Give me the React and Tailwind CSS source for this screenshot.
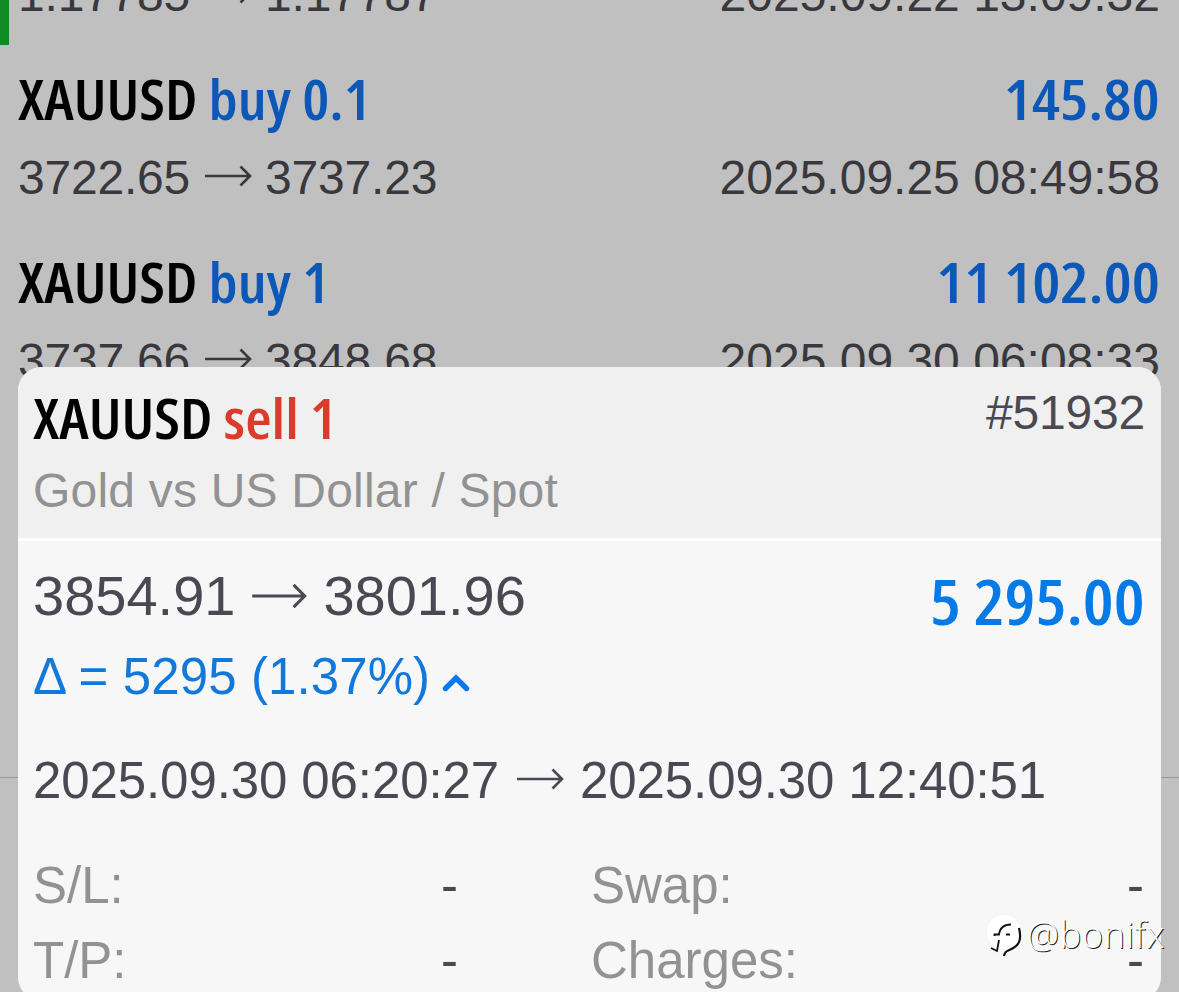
const deals = [
  { symbol: "EURUSD", action: "buy 1", profit: "2.00", open: "1.17785", close: "1.17787", time: "2025.09.22 13:09:32", marked: true },
  { symbol: "XAUUSD", action: "buy 0.1", profit: "145.80", open: "3722.65", close: "3737.23", time: "2025.09.25 08:49:58" },
  { symbol: "XAUUSD", action: "buy 1", profit: "11 102.00", open: "3737.66", close: "3848.68", time: "2025.09.30 06:08:33" },
];

const details = [
  { label: "S/L:", value: "-" },
  { label: "Swap:", value: "-" },
  { label: "T/P:", value: "-" },
  { label: "Charges:", value: "-" },
];

const Arrow = ({ className }) => (
  <svg viewBox="0 0 48 24" fill="none" stroke="currentColor" strokeWidth="2.6" className={className}>
    <path d="M1 12H46M36.500 2.500L46 12L36.500 21.500" />
  </svg>
);

const DealRow = ({ deal }) => (
  <div
    className={`h-[183px] shrink-0 pr-[19px] pt-[17px] ${deal.marked ? "border-l-[9px] border-[#128a24] pl-[9px]" : "pl-[18px]"}`}
  >
    <div className="flex h-[72px] justify-between whitespace-nowrap font-['Open_Sans'] text-[56px] font-semibold leading-[72px] font-stretch-75%">
      <div className="origin-left scale-x-[1.084]">
        <span className="text-black">{deal.symbol}</span>{" "}
        <span className="text-[#0b58b8]">{deal.action}</span>
      </div>
      <span className="origin-right scale-x-[1.125] text-[#0b58b8]">{deal.profit}</span>
    </div>
    <div className="mt-4 flex h-14 justify-between whitespace-nowrap text-5xl leading-14 text-[#39383d]">
      <div className="flex items-center tracking-[-0.2px]">
        <span>{deal.open}</span>
        <Arrow className="-mt-1 ml-[14px] mr-[13px] h-6 w-12" />
        <span>{deal.close}</span>
      </div>
      <span>{deal.time}</span>
    </div>
  </div>
);

const DealCard = () => (
  <div className="absolute left-[18px] top-[367px] h-[634px] w-[1143px] overflow-hidden rounded-3xl bg-[#f7f7f7] text-[#4a4953]">
    <div className="flex h-[174px] justify-between whitespace-nowrap border-b-[3px] border-[#fdfdfd] bg-[#f0f0f0] pl-[15px] pr-4">
      <div className="pt-[14px]">
        <div className="h-[72px] origin-left scale-x-[1.084] font-['Open_Sans'] text-[56px] font-semibold leading-[72px] font-stretch-75%">
          <span className="text-black">XAUUSD</span>{" "}
          <span className="text-[#da3b2b]">sell 1</span>
        </div>
        <div className="mt-[10px] text-5xl leading-14 tracking-[0.2px] text-[#929292]">Gold vs US Dollar / Spot</div>
      </div>
      <div className="pt-[18px] text-5xl leading-14 tracking-[-0.2px]">#51932</div>
    </div>

    <div className="whitespace-nowrap pl-[15px] pr-4 pt-[21px]">
      <div className="flex h-[85px] justify-between">
        <div className="flex h-16 items-center text-[56px] leading-16">
          <span className="pt-1">3854.91</span>
          <Arrow className="mx-4 mt-1 h-7 w-14" />
          <span className="pt-1">3801.96</span>
        </div>
        <div className="-mt-px origin-right scale-x-[1.08] font-['Open_Sans'] text-[64px] font-semibold leading-20 text-[#067ae6] font-stretch-75%">
          5 295.00
        </div>
      </div>
      <div className="flex h-[60px] items-center text-[51px] leading-[60px] tracking-[0.1px] text-[#1279db]">
        <span>Δ = 5295 (1.37%)</span>
        <svg viewBox="0 0 28 20" fill="none" stroke="#0878ec" strokeWidth="5.4" className="ml-3 mt-3 h-5 w-7">
          <path d="M3.5 15.5L14 5L24.5 15.5" strokeLinecap="round" />
        </svg>
      </div>
      <div className="mt-11 flex h-[60px] items-center text-[51px] leading-[60px] tracking-[-0.1px]">
        <span>2025.09.30 06:20:27</span>
        <Arrow className="-mt-1 ml-4 mr-[15px] h-6 w-[50px]" />
        <span>2025.09.30 12:40:51</span>
      </div>
      <div className="mt-[45px] grid grid-cols-[425px_553px] gap-x-[133px] gap-y-[15px] text-[51px] leading-[60px]">
        {details.map((item) => (
          <div key={item.label} className="flex h-[60px] justify-between">
            <span className="text-[#929292]">{item.label}</span>
            <span>{item.value}</span>
          </div>
        ))}
      </div>
    </div>
  </div>
);

const Watermark = () => (
  <div className="absolute left-[985px] top-[907px] flex h-[56px] items-center">
    <svg viewBox="0 0 40 48" fill="none" className="h-12 w-10">
      <circle cx="19" cy="21" r="17" fill="#fff" />
      <path d="M20 38L31 34L20 45Z" fill="#fff" />
      <path d="M9.500 25V23.500H14C15 16 19 13.500 26 13.500M21 23.500H25M6 37L12 40L14 29" stroke="#111" strokeWidth="1.8" />
      <path d="M19 45C20 38 26 40 31 35C36 31 36 25 34 17" stroke="#111" strokeWidth="2.2" />
    </svg>
    <span className="ml-0.5 font-['Open_Sans'] text-[36px] font-light tracking-[0.8px] text-white [text-shadow:1px_1px_0.5px_#222]">@bonifx</span>
  </div>
);

export default function App() {
  return (
    <div className="relative h-[992px] w-[1179px] overflow-hidden bg-[#c0c0c0] font-['Liberation_Sans',sans-serif]">
      <div className="-mt-[138px] flex h-[916px] flex-col border-b border-[#9a9a9a]">
        {deals.map((deal) => (
          <DealRow key={deal.time} deal={deal} />
        ))}
      </div>
      <DealCard />
      <Watermark />
    </div>
  );
}
